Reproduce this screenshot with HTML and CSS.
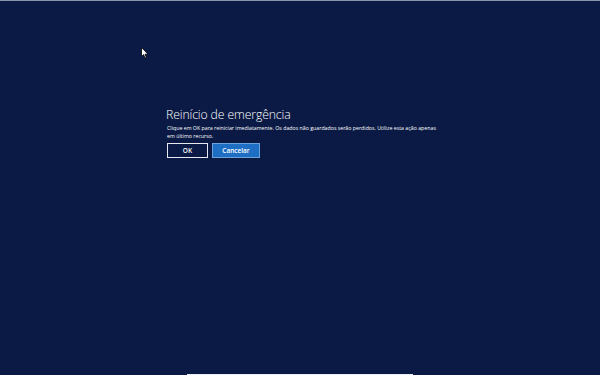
FILE: index.html
```html
<!DOCTYPE html>
<html lang="pt">
<head>
    <meta charset="UTF-8">
    <title>Reinício de emergência</title>
    <link rel="stylesheet" href="styles.css">
</head>
<body>
    <div class="screen">
        <div class="dialog">
            <h1>Reinício de emergência</h1>
            <p>Clique em OK para reiniciar imediatamente. Os dados não guardados serão perdidos. Utilize esta ação apenas em último recurso.</p>
            <div class="buttons">
                <button class="btn">OK</button>
                <button class="btn primary">Cancelar</button>
            </div>
        </div>
        <svg class="cursor" width="8" height="12" viewBox="0 0 8 12">
            <path d="M0.5 0.5 L0.5 9.5 L2.6 7.6 L4 11 L5.4 10.4 L4 7.2 L7 7.2 Z" fill="#fff" stroke="#000" stroke-width="0.8"/>
        </svg>
        <div class="taskbar-edge"></div>
    </div>
</body>
</html>
```

FILE: styles.css
```css
html, body {
    margin: 0;
    height: 100%;
}
body {
    background: #0a1a45;
    font-family: "Open Sans", "Noto Sans", sans-serif;
    color: #fff;
    overflow: hidden;
}
.screen {
    position: relative;
    height: 375px;
    border-top: 1px solid #8a94a8;
    box-sizing: border-box;
}
.dialog {
    padding: 105px 0 0 166px;
}
h1 {
    font-weight: 300;
    font-size: 12.2px;
    margin: 0;
    line-height: 17px;
    letter-spacing: -0.1px;
}
p {
    font-size: 5.25px;
    line-height: 8px;
    margin: 1px 0 0 1px;
    width: 276px;
}
.buttons {
    display: flex;
    gap: 4px;
    margin: 3px 0 0 1px;
}
.btn {
    font-family: "Open Sans", "Noto Sans", sans-serif;
    font-size: 6.5px;
    font-weight: 600;
    color: #fff;
    background: #0a1a45;
    border: 1px solid #e6e9f0;
    width: 41px;
    height: 15px;
    padding: 0;
    cursor: pointer;
}
.btn.primary {
    background: #1e6ec4;
    border-color: #6aa3dc;
    width: 48px;
}
.cursor {
    position: absolute;
    left: 141px;
    top: 46px;
}
.taskbar-edge {
    position: absolute;
    left: 187px;
    width: 226px;
    bottom: 0;
    height: 1px;
    background: #e8ecf5;
}
```
